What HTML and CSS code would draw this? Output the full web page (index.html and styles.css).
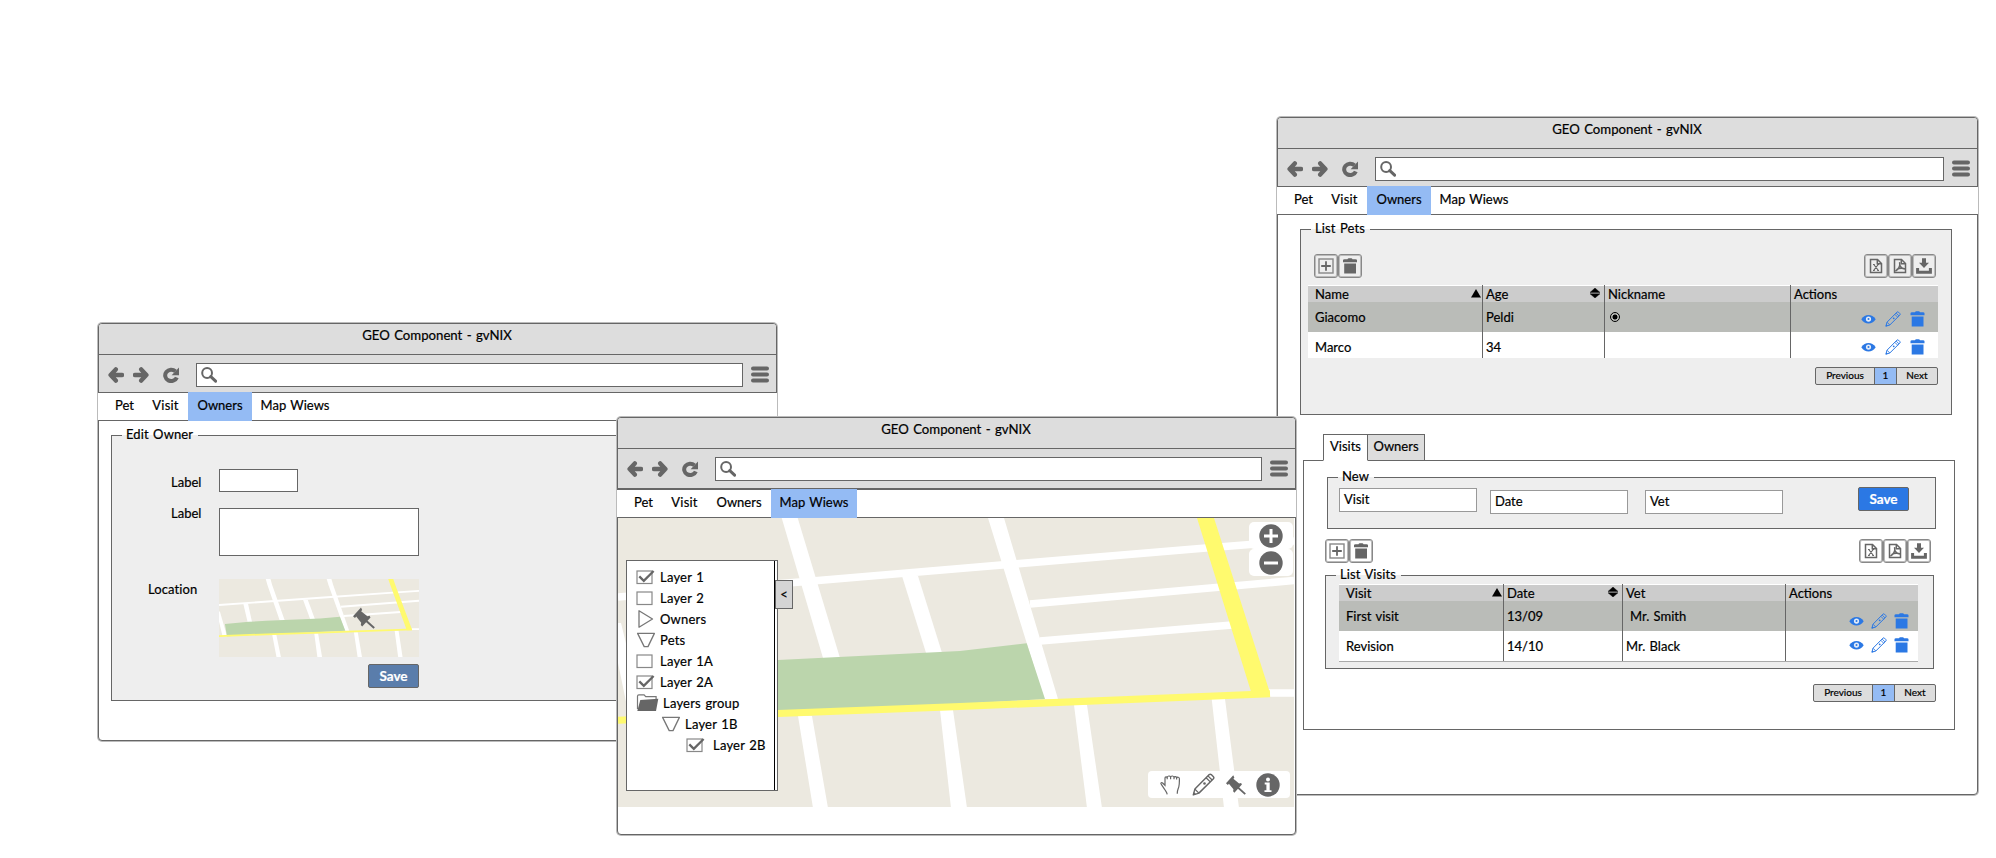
FILE: index.html
```html
<!DOCTYPE html>
<html lang="en">
<head>
<meta charset="utf-8">
<title>GEO Component - gvNIX</title>
<link rel="stylesheet" href="styles.css">
</head>
<body>
<svg class="defs" width="0" height="0" aria-hidden="true">
  <symbol id="back" viewBox="0 0 16 16"><path d="M7.800 2.400 2.600 8l5.200 5.600M2.800 8H14" fill="none" stroke="currentColor" stroke-width="4.400" stroke-linejoin="round" stroke-linecap="round"/></symbol>
  <symbol id="forward" viewBox="0 0 16 16"><path d="M8.200 2.400 13.400 8l-5.200 5.600M13.200 8H2" fill="none" stroke="currentColor" stroke-width="4.400" stroke-linejoin="round" stroke-linecap="round"/></symbol>
  <symbol id="reload" viewBox="0 0 16 16"><path d="M12.400 4.300A6 5.700 0 1 0 13.800 10.400" fill="none" stroke="currentColor" stroke-width="4"/><path d="M16 .6v7.600H8.600z" fill="currentColor"/></symbol>
  <symbol id="search" viewBox="0 0 16 16"><circle cx="6.100" cy="6" r="4.900" fill="none" stroke="currentColor" stroke-width="2"/><path d="m9.800 9.600 4.800 4.600" stroke="currentColor" stroke-width="3" stroke-linecap="round"/></symbol>
  <symbol id="burger" viewBox="0 0 18 17"><path d="M2 2.400h14M2 8.500h14M2 14.600h14" stroke="currentColor" stroke-width="4" stroke-linecap="round"/></symbol>
  <symbol id="add" viewBox="0 0 16 16"><rect x="1" y="1" width="14" height="14" fill="none" stroke="#888" stroke-width="1.400"/><path d="M8 3.200v9.600M3.200 8h9.600" stroke="currentColor" stroke-width="1.800"/></symbol>
  <symbol id="trash" viewBox="0 0 15 16"><path d="M.5 2.200Q.5 1.200 2 1.200h3Q5.300.2 6.300.2h2.400Q9.700.2 10 1.200h3q1.500 0 1.500 1V4.300H.5zM1.700 5.500h11.800v10H1.700z" fill="currentColor"/></symbol>
  <symbol id="excel" viewBox="0 0 16 16"><path d="M2.500 1.500h7l4 4v9h-11zM9.300 1.500v4.200h4.200" fill="none" stroke="currentColor" stroke-width="1.500"/><path d="m5.800 6.500 4.600 6M10.200 6.500l-4.600 6M5 6.500h1.800M9.200 6.500H11M5 12.500h1.800M9.200 12.500H11" stroke="currentColor" stroke-width="1.200"/></symbol>
  <symbol id="pdf" viewBox="0 0 16 16"><path d="M2.500 1.500h7l4 4v9h-11zM9.300 1.500v4.200h4.200" fill="none" stroke="currentColor" stroke-width="1.500"/><path d="M7.600 4.200c.6 3-.2 6.500-4.200 9M7.800 7.500c.8 2 2.200 3 5.200 3.400M4.600 11.600c2.200-1.400 4.600-1.700 8.400-.8" fill="none" stroke="currentColor" stroke-width="1.500"/></symbol>
  <symbol id="download" viewBox="0 0 16 16"><path d="M6 .3h4v4.500h3L8 10 3 4.800h3z" fill="currentColor"/><path d="M1.600 10v4.200h12.800V10" fill="none" stroke="currentColor" stroke-width="3"/></symbol>
  <symbol id="eye" viewBox="0 0 15 16"><path d="M.3 8.200C2.300 5.200 4.800 4 7.500 4s5.200 1.200 7.200 4.200c-2 3-4.500 4.300-7.200 4.300S2.300 11.200.3 8.200z" fill="currentColor"/><circle cx="7.500" cy="8.100" r="2.600" class="eye-ring"/><circle cx="7.500" cy="8.100" r="1" fill="currentColor"/></symbol>
  <symbol id="pencil" viewBox="0 0 16 16"><g fill="none" stroke="currentColor" stroke-linejoin="round"><path d="M.9 15.200 2 11.200 12 1.100q.7-.6 1.400 0l1.500 1.500q.6.7 0 1.400L4.800 14z"/><path d="m2 11.200 2.800 2.800M9.800 3.300l2.900 2.900M11.100 2l2.900 2.900" stroke-width=".9"/></g><path d="m.6 15.500.7-2.300 1.600 1.600z" fill="currentColor"/><circle cx="8.700" cy="7.300" r=".9" fill="currentColor"/></symbol>
  <symbol id="hand" viewBox="0 0 20 20"><path d="M7.200 19.300c-.3-2.200-1.400-3-2.500-4.800C3.500 12.600 2.200 11 1 8.800c-.4-1 .7-1.600 1.600-.8L5 10.300V3c0-1.400 2-1.500 2.200-.2C7.200.6 10.400.4 10.600 2.200 11 .4 14 .7 14 2.600c.3-1.500 2.600-1.200 2.600.4.600-1.300 2.800-.9 2.800.8 0 3 .1 5.500-.6 8-.7 2.300-1.700 3.500-1.500 7M7.200 2.800v1.400M10.600 2.200v2M14 2.600v1.600M16.600 3v1.400" fill="none" stroke="currentColor" stroke-width="1.200"/></symbol>
  <symbol id="pin" viewBox="0 0 22 22"><path d="M0 9.200 8 .4 9.200 3l-1.100 1.200 6.300 5.100 2.200-.5.900 1.700-8.300 9-1.400-1.500.4-2.200-5-6.200L2 10.900z" fill="currentColor"/><path d="m12.500 13.200 8.700 7.800" stroke="currentColor" stroke-width="2"/></symbol>
  <symbol id="box" viewBox="0 0 20 16"><rect x="1" y="2" width="15" height="12.500" fill="#fff" stroke="#888" stroke-width="1.200"/></symbol>
  <symbol id="boxon" viewBox="0 0 20 16"><rect x="1" y="2" width="15" height="12.500" fill="#fff" stroke="#888" stroke-width="1.200"/><path d="m3.300 7.400 4.500 4.400L17.600 2" fill="none" stroke="#666" stroke-width="2.300"/></symbol>
  <symbol id="closed" viewBox="0 0 20 20"><path d="M3 1.800v16.400L16.500 10z" fill="#fff" stroke="#777" stroke-width="1.300" stroke-linejoin="round"/></symbol>
  <symbol id="open" viewBox="0 0 20 16"><path d="M1.600 1.400h16.800L12 14.600h-3.800z" fill="#fff" stroke="#777" stroke-width="1.300" stroke-linejoin="round"/></symbol>
  <symbol id="folder" viewBox="0 0 22 18"><path d="M1 15V2.200Q1 .8 2.400.8h5.200L9.200 2.600h10.400v4" fill="#fff" stroke="#777" stroke-width="1.200"/><path d="M3.800 6 21.800 4.800 19.500 17H.8z" fill="#666"/></symbol>
  <symbol id="up" viewBox="0 0 10 9"><path d="M5 0l5 8.400H0z" fill="#000"/></symbol>
  <symbol id="updown" viewBox="0 0 10 10"><path d="M5 0 10 4.400H0zM5 10 0 5.800h10z" fill="#000" stroke="#000" stroke-width=".4"/></symbol>
  <symbol id="citymap" viewBox="0 0 676 289" overflow="visible">
    <rect y="-24" width="676" height="314" fill="#ece9e0"/>
    <g fill="none" stroke="#fff" stroke-width="7.600">
      <path d="M0 79 200 62.500 342 50.500 588 30 676 23M412 86 676 62.500M422 123 614 107M645 175h31"/>
    </g>
    <g fill="#fff">
      <path d="M158-24h16L179.700 0 222 140h-17L163.700 0z"/>
      <path d="M284 58h16l25 80h-16z"/>
      <path d="M364-24h16L386 0l54 181h-14L370 0z"/>
      <path d="M82 73h16l14 76H97zM0 105h3l24 98H12L0 145z"/>
      <path d="M180 198h14l16 92h-15zM322 192h13l14 98h-16zM456 187h13l15 103h-15zM593.700 181H607l14 109h-15z"/>
    </g>
    <path d="m20 155 81-9 59-4 182-9 66.700-7.700L427 181l-85 5-315 17z" fill="#bbd5ac"/>
    <path d="M572-24h17L596 0l56 175v4H634.700L579 0z" fill="#fffa6e"/>
    <path d="m0 202.300 160-6.700 182-7.200 310-12.600" fill="none" stroke="#fffa6e" stroke-width="7"/>
  </symbol>
</svg>

<section class="window owner-window">
  <h1 class="titlebar">GEO Component - gvNIX</h1>
  <div class="toolbar">
    <svg class="i16 nav"><use href="#back"/></svg><svg class="i16 nav"><use href="#forward"/></svg><svg class="i16 reload"><use href="#reload"/></svg>
    <div class="address"><svg class="i16"><use href="#search"/></svg></div>
    <svg class="burger"><use href="#burger"/></svg>
  </div>
  <nav class="menu"><a class="m-pet">Pet</a><a class="m-visit">Visit</a><a class="m-owners active">Owners</a><a class="m-map">Map Wiews</a></nav>
  <fieldset class="group edit-owner">
    <legend>Edit Owner</legend>
    <div class="row row-name"><label>Label</label><div class="field small"></div></div>
    <div class="row row-text"><label>Label</label><div class="field large"></div></div>
    <div class="row row-location"><label>Location</label>
      <div class="thumb">
        <svg class="thumb-map" viewBox="0 -24 676 309.500" preserveAspectRatio="none"><use href="#citymap" width="676" height="289"/></svg>
        <svg class="thumb-pin"><use href="#pin"/></svg>
      </div>
    </div>
    <button class="save muted">Save</button>
  </fieldset>
</section>

<section class="window pets-window">
  <h1 class="titlebar">GEO Component - gvNIX</h1>
  <div class="toolbar">
    <svg class="i16 nav"><use href="#back"/></svg><svg class="i16 nav"><use href="#forward"/></svg><svg class="i16 reload"><use href="#reload"/></svg>
    <div class="address"><svg class="i16"><use href="#search"/></svg></div>
    <svg class="burger"><use href="#burger"/></svg>
  </div>
  <nav class="menu"><a class="m-pet">Pet</a><a class="m-visit">Visit</a><a class="m-owners active">Owners</a><a class="m-map">Map Wiews</a></nav>

  <fieldset class="group list-pets">
    <legend>List Pets</legend>
    <div class="tools">
      <span class="tool"><svg class="i16"><use href="#add"/></svg></span><span class="tool"><svg class="i16"><use href="#trash"/></svg></span>
      <span class="spacer"></span>
      <span class="tool"><svg class="i16"><use href="#excel"/></svg></span><span class="tool"><svg class="i16"><use href="#pdf"/></svg></span><span class="tool"><svg class="i16"><use href="#download"/></svg></span>
    </div>
    <div class="table pets-table">
      <div class="cell head">Name<svg class="sort"><use href="#up"/></svg></div>
      <div class="cell head">Age<svg class="sort both"><use href="#updown"/></svg></div>
      <div class="cell head">Nickname</div>
      <div class="cell head">Actions</div>
      <div class="cell sel">Giacomo</div>
      <div class="cell sel">Peldi</div>
      <div class="cell sel"><span class="radio"></span></div>
      <div class="cell sel actions"><svg class="i15"><use href="#eye"/></svg><svg class="i16"><use href="#pencil"/></svg><svg class="i15"><use href="#trash"/></svg></div>
      <div class="cell">Marco</div>
      <div class="cell">34</div>
      <div class="cell"></div>
      <div class="cell actions"><svg class="i15"><use href="#eye"/></svg><svg class="i16"><use href="#pencil"/></svg><svg class="i15"><use href="#trash"/></svg></div>
    </div>
    <div class="pager"><span>Previous</span><span class="current">1</span><span>Next</span></div>
  </fieldset>

  <div class="tabs"><span class="tab open">Visits</span><span class="tab">Owners</span></div>
  <div class="panel">
    <fieldset class="group new-visit">
      <legend>New</legend>
      <div class="inputs">
        <div class="input first">Visit</div><div class="input">Date</div><div class="input">Vet</div>
        <button class="save">Save</button>
      </div>
    </fieldset>
    <div class="tools">
      <span class="tool"><svg class="i16"><use href="#add"/></svg></span><span class="tool"><svg class="i16"><use href="#trash"/></svg></span>
      <span class="spacer"></span>
      <span class="tool"><svg class="i16"><use href="#excel"/></svg></span><span class="tool"><svg class="i16"><use href="#pdf"/></svg></span><span class="tool"><svg class="i16"><use href="#download"/></svg></span>
    </div>
    <fieldset class="group list-visits">
      <legend>List Visits</legend>
      <div class="table visits-table">
        <div class="cell head">Visit<svg class="sort"><use href="#up"/></svg></div>
        <div class="cell head">Date<svg class="sort both"><use href="#updown"/></svg></div>
        <div class="cell head">Vet</div>
        <div class="cell head">Actions</div>
        <div class="cell sel">First visit</div>
        <div class="cell sel">13/09</div>
        <div class="cell sel indent">Mr. Smith</div>
        <div class="cell sel actions"><svg class="i15"><use href="#eye"/></svg><svg class="i16"><use href="#pencil"/></svg><svg class="i15"><use href="#trash"/></svg></div>
        <div class="cell">Revision</div>
        <div class="cell">14/10</div>
        <div class="cell">Mr. Black</div>
        <div class="cell actions"><svg class="i15"><use href="#eye"/></svg><svg class="i16"><use href="#pencil"/></svg><svg class="i15"><use href="#trash"/></svg></div>
      </div>
    </fieldset>
    <div class="pager"><span>Previous</span><span class="current">1</span><span>Next</span></div>
  </div>
</section>

<section class="window map-window">
  <h1 class="titlebar">GEO Component - gvNIX</h1>
  <div class="toolbar">
    <svg class="i16 nav"><use href="#back"/></svg><svg class="i16 nav"><use href="#forward"/></svg><svg class="i16 reload"><use href="#reload"/></svg>
    <div class="address"><svg class="i16"><use href="#search"/></svg></div>
    <svg class="burger"><use href="#burger"/></svg>
  </div>
  <nav class="menu"><a class="m-pet">Pet</a><a class="m-visit">Visit</a><a class="m-owners">Owners</a><a class="m-map active">Map Wiews</a></nav>
  <div class="map">
    <svg class="map-picture" viewBox="0 0 676 289"><use href="#citymap" width="676" height="289"/></svg>
    <div class="layers">
      <div class="layer"><svg class="i20"><use href="#boxon"/></svg>Layer 1</div>
      <div class="layer"><svg class="i20"><use href="#box"/></svg>Layer 2</div>
      <div class="layer"><svg class="i20 tall"><use href="#closed"/></svg>Owners</div>
      <div class="layer"><svg class="i20"><use href="#open"/></svg>Pets</div>
      <div class="layer"><svg class="i20"><use href="#box"/></svg>Layer 1A</div>
      <div class="layer"><svg class="i20"><use href="#boxon"/></svg>Layer 2A</div>
      <div class="layer"><svg class="folder"><use href="#folder"/></svg>Layers group</div>
      <div class="layer child"><svg class="i20"><use href="#open"/></svg>Layer 1B</div>
      <div class="layer grandchild"><svg class="i20"><use href="#boxon"/></svg>Layer 2B</div>
    </div>
    <div class="handle">&lt;</div>
    <div class="zoom">
      <span><svg viewBox="0 0 24 24"><circle cx="12" cy="12" r="11.700" fill="#666"/><path d="M12 5v14M5 12h14" stroke="#fff" stroke-width="3"/></svg></span>
      <span><svg viewBox="0 0 24 24"><circle cx="12" cy="12" r="11.700" fill="#666"/><path d="M5 12h14" stroke="#fff" stroke-width="3"/></svg></span>
    </div>
    <div class="map-tools">
      <svg class="t-hand"><use href="#hand"/></svg>
      <svg class="t-pencil"><use href="#pencil"/></svg>
      <svg class="t-pin"><use href="#pin"/></svg>
      <svg class="t-info" viewBox="0 0 24 24"><circle cx="12" cy="12" r="11.700" fill="#666"/><circle cx="12" cy="6.400" r="2" fill="#fff"/><path d="M8.700 9.600h5v7.600h1.800v1.800H8.500v-1.800h1.900v-5.800H8.700z" fill="#fff"/></svg>
    </div>
  </div>
</section>
</body>
</html>
```
FILE: styles.css
```css
* { box-sizing: border-box; }
body {
  margin: 0;
  width: 1996px;
  height: 858px;
  position: relative;
  overflow: hidden;
  background: #fff;
  color: #000;
  font: 13px/16px Lato, "Liberation Sans", sans-serif;
  word-spacing: 1px;
  -webkit-text-stroke: .2px;
}
svg { display: block; flex: none; color: #666; }
.defs { position: absolute; }
.i15 { width: 15px; height: 16px; }
.i16 { width: 16px; height: 16px; }

/* Windows on the canvas */
.window {
  position: absolute;
  background: #fff;
  border: 1px solid #666;
  border-radius: 4px;
  box-shadow: 0 0 0 1px #bbb;
}
.owner-window { left: 98px; top: 323px; width: 679px; height: 418px; }
.pets-window { left: 1277px; top: 117px; width: 701px; height: 678px; }
.map-window { left: 617px; top: 417px; width: 679px; height: 418px; }

.titlebar {
  margin: 0;
  height: 31px;
  padding: 3px 1px 0 0;
  border-bottom: 1px solid #666;
  border-radius: 3px 3px 0 0;
  background: #ddd;
  font-size: 13.200px;
  font-weight: 400;
  text-align: center;
}
.toolbar {
  display: flex;
  align-items: center;
  height: 37px;
  padding: 2px 7px 0 9px;
  background: #ddd;
}
.map-window .toolbar { height: 40px; padding-bottom: 2px; border-bottom: 1px solid #666; }
.nav { margin-right: 9px; }
.reload { margin: 0 17px 0 5px; }
.address {
  flex: 1;
  height: 24px;
  padding: 3px 4px;
  border: 1px solid #666;
  background: #fff;
}
.burger { width: 18px; height: 17px; margin-left: 8px; }

.menu {
  display: flex;
  height: 29px;
  margin: 0 -1px;
  padding-left: 8px;
  border: solid #666;
  border-width: 1px 0;
  background: #fff;
  text-align: center;
}
.menu a { padding-top: 5px; height: 29px; margin-top: -1px; }
.m-pet { width: 37px; }
.m-visit { width: 45px; letter-spacing: .2px; }
.m-owners { width: 64px; }
.m-map { width: 86px; }
.menu .active { background: #94bbf4; }

/* Field groups */
.group {
  margin: 0;
  padding: 0;
  min-width: 0;
  border: 1px solid #666;
  background: #eee;
}
.group legend {
  margin-left: 10px;
  padding: 0 5px 2px 4px;
  line-height: 15px;
  letter-spacing: .1px;
}
.field { border: 1px solid #666; background: #fff; }
.save {
  display: block;
  width: 51px;
  height: 24px;
  padding: 0 0 1px;
  border: 1px solid #666;
  border-radius: 2px;
  background: #2b78e4;
  color: #fff;
  font: bold 13.500px/18px Lato, "Liberation Sans", sans-serif;
}
.save.muted { background: #5a7dab; }

/* Edit owner */
.edit-owner { width: 655px; height: 274px; margin: 6px 0 0 12px; }
.row { display: flex; }
.row label { flex: none; }
.row-name { padding: 25px 0 0 59px; }
.row-name label { width: 48px; padding-top: 5px; }
.small { width: 79px; height: 23px; }
.row-text { padding: 16px 0 0 59px; }
.row-text label { width: 48px; line-height: 10px; }
.large { width: 200px; height: 48px; }
.row-location { padding: 23px 0 0 36px; }
.row-location label { width: 71px; padding-top: 2px; letter-spacing: .1px; }
.thumb { position: relative; width: 200px; height: 78px; overflow: hidden; }
.thumb-map { width: 200px; height: 78px; }
.thumb-pin { position: absolute; left: 134px; top: 28px; width: 22px; height: 22px; }
.edit-owner .save { margin: 7px 0 0 256px; }

/* Lists */
.tools { display: flex; }
.spacer { flex: 1; }
.tool {
  display: grid;
  place-items: center;
  width: 24px;
  height: 24px;
  border: 1px solid #888;
  border-radius: 3px;
  box-shadow: inset 0 0 0 1px #bbb;
}
.table { display: grid; }
.cell {
  display: flex;
  padding: 7px 3px 0 3px;
  border-left: 1px solid #666;
  background: #fff;
}
.cell:nth-child(4n+1) { border-left: 0; padding-left: 7px; }
.cell.head { padding-top: 1px; background: linear-gradient(#fff 1px, #ccc 1px); }
.cell.sel { background: #babcb8; }
.cell.indent { padding-left: 7px; }
.sort { width: 10px; height: 9px; margin: 3px -2px 0 auto; }
.sort.both { height: 10px; margin: 2px 1px 0 auto; }
.radio {
  width: 10px;
  height: 10px;
  margin: 3px 0 0 2px;
  border: 1px solid #000;
  border-radius: 50%;
  background: radial-gradient(circle, #000 2.200px, transparent 2.800px);
}
.cell.actions { justify-content: flex-end; gap: 9px; padding: 7px 13px 0 0; }
.cell.actions svg { color: #2b78e4; }
.cell.actions.sel { padding-top: 9px; }
.eye-ring { fill: #e4ecf8; }

.pager {
  display: grid;
  grid-template-columns: 58px 23px 40px;
  width: 123px;
  height: 18px;
  border: 1px solid #666;
  border-radius: 2px;
  background: #ddd;
  font-size: 10px;
  line-height: 15px;
  text-align: center;
}
.pager .current { border: solid #666; border-width: 0 1px; background: #94bbf4; }

.list-pets { width: 652px; height: 194px; margin: 6px 0 0 22px; }
.list-pets .tools { padding: 16px 15px 7px 13px; }
.pets-table { width: 630px; margin-left: 7px; grid-template: 17px 30px 26px / 174px 122px 186px 148px; }
.list-pets .pager { margin: 9px 0 0 514px; }

/* Tabs */
.tabs { display: flex; margin: 19px 0 0 45px; }
.tab {
  height: 27px;
  width: 58px;
  padding-top: 3px;
  margin-left: -1px;
  border: 1px solid #666;
  background: #ddd;
  text-align: center;
}
.tab.open {
  position: relative;
  width: 45px;
  margin-left: 0;
  border-bottom-color: #fff;
  background: #fff;
}
.panel { width: 652px; height: 270px; margin: -1px 0 0 25px; padding-top: 8px; border: 1px solid #666; }
.new-visit { width: 609px; height: 60px; margin-left: 23px; }
.inputs { display: flex; align-items: flex-start; padding-left: 11px; }
.input {
  width: 138px;
  height: 24px;
  margin: 4px 0 0 13px;
  padding: 2px 4px;
  border: 1px solid #999;
  background: #fff;
}
.input + .input + .input { margin-left: 17px; }
.input.first { margin: 2px 0 0; }
.new-visit .save { margin: 1px 0 0 75px; }
.panel .tools { width: 606px; margin: 10px 0 4px 21px; }
.list-visits { width: 609px; height: 102px; margin-left: 21px; }
.visits-table {
  width: 579px;
  margin-left: 13px;
  border-bottom: 1px solid #aaa;
  grid-template: 17px 30px 30px / 164px 119px 163px 133px;
}
.visits-table .cell.actions { gap: 7px; padding: 6px 9.500px 0 0; }
.visits-table .cell.actions.sel { padding-top: 12px; }
.panel .pager { margin: 15px 0 0 509px; }

/* Map */
.map { position: relative; width: 676px; height: 289px; overflow: hidden; }
.map-picture { width: 676px; height: 289px; }
.layers {
  position: absolute;
  left: 8px;
  top: 42px;
  width: 152px;
  height: 231px;
  padding: 5px 0 0 9px;
  border: 1px solid #666;
  background: linear-gradient(90deg, transparent 147px, #000 147px 148px, transparent 148px) #fff;
  letter-spacing: .2px;
}
.layer { display: flex; align-items: center; gap: 4px; height: 21px; white-space: nowrap; }
.i20 { width: 20px; height: 16px; }
.i20.tall { height: 20px; }
.folder { width: 23px; height: 18px; }
.layer.child { padding-left: 25px; }
.layer.grandchild { padding-left: 50px; gap: 7px; }
.handle {
  position: absolute;
  left: 157px;
  top: 62px;
  width: 18px;
  height: 29px;
  padding-top: 5px;
  border: 1px solid #666;
  background: #d4d4d4;
  text-align: center;
}
.zoom { position: absolute; left: 631px; top: 4px; }
.zoom span { display: grid; place-items: center; width: 44px; height: 27px; border-radius: 5px; background: #fff; }
.zoom svg { width: 24px; height: 24px; }
.map-tools {
  position: absolute;
  left: 530px;
  top: 253px;
  display: flex;
  align-items: center;
  width: 142px;
  height: 27px;
  padding-left: 12px;
  border-radius: 4px;
  background: #fff;
}
.t-hand { width: 20px; height: 20px; }
.t-pencil { width: 23px; height: 23px; margin-left: 12px; }
.t-pin { width: 20px; height: 20px; margin-left: 11px; }
.t-info { width: 24px; height: 24px; margin-left: 10px; }
```
